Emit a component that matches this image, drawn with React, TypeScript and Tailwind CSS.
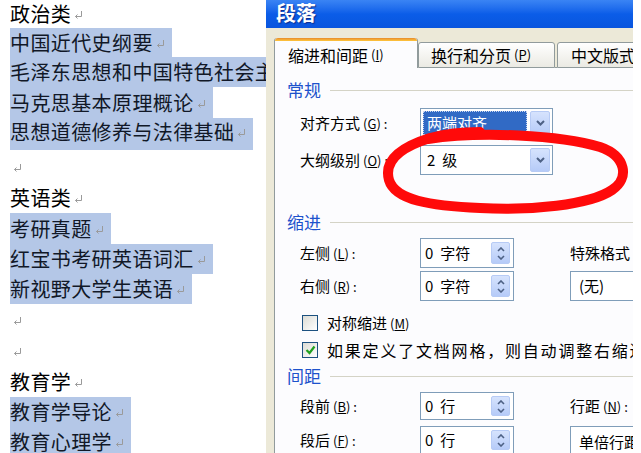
import React from "react";

type Line = { text: string; row: string; hl?: boolean; lift?: boolean };

const lines: Line[] = [
  { text: "政治类", row: "h-[28px]" },
  { text: "中国近代史纲要", row: "h-[29px]", hl: true },
  { text: "毛泽东思想和中国特色社会主义理论体系概论", row: "h-[30px]", hl: true },
  { text: "马克思基本原理概论", row: "h-[31px]", hl: true },
  { text: "思想道德修养与法律基础", row: "h-[32px]", hl: true, lift: true },
  { text: "", row: "h-[33px]" },
  { text: "英语类", row: "h-[30px]" },
  { text: "考研真题", row: "h-[31px]", hl: true },
  { text: "红宝书考研英语词汇", row: "h-[30px]", hl: true },
  { text: "新视野大学生英语", row: "h-[30px]", hl: true },
  { text: "", row: "h-[32px]" },
  { text: "", row: "h-[30px]" },
  { text: "教育学", row: "h-[31px]" },
  { text: "教育学导论", row: "h-[30px]", hl: true },
  { text: "教育心理学", row: "h-[30px]", hl: true },
];

function Mark() {
  return (
    <svg width="9" height="8" viewBox="0 0 9 8" className="ml-[3px] mr-[7px] shrink-0 translate-y-[1px]">
      <path d="M7.5 0V5.5H1.5" fill="none" stroke="#9a9a9a" strokeWidth="1" />
      <path d="M3.5 3.5L1.5 5.5L3.5 7.5" fill="none" stroke="#9a9a9a" strokeWidth="1" />
    </svg>
  );
}

function DocLine({ line }: { line: Line }) {
  return (
    <div className={`flex items-stretch pl-[10px] ${line.row}`}>
      <div
        className={`flex items-center whitespace-nowrap text-[20px] leading-[24px] tracking-[0.4px] ${
          line.hl ? "bg-[#b4c7e7] text-[#111827]" : "text-black"
        } ${line.lift ? "pb-[4px]" : ""}`}
      >
        {line.text}
        <Mark />
      </div>
    </div>
  );
}

function DropBtn() {
  return (
    <div className="flex h-full w-[20px] shrink-0 items-center justify-center rounded-[2px] border border-[#b7cbf5] bg-gradient-to-b from-[#d6e3fd] to-[#b6cbf8]">
      <svg width="9" height="6" viewBox="0 0 9 6">
        <path d="M1 1l3.5 3.5L8 1" fill="none" stroke="#4d6185" strokeWidth="2" />
      </svg>
    </div>
  );
}

function SpinBtn() {
  return (
    <div className="flex h-full w-[19px] shrink-0 flex-col items-center justify-center gap-[3px] rounded-[2px] border border-[#b7cbf5] bg-gradient-to-b from-[#d6e3fd] to-[#b6cbf8]">
      <svg width="8" height="5" viewBox="0 0 8 5">
        <path d="M1 4l3-3 3 3" fill="none" stroke="#4d6185" strokeWidth="1.6" />
      </svg>
      <svg width="8" height="5" viewBox="0 0 8 5">
        <path d="M1 1l3 3 3-3" fill="none" stroke="#4d6185" strokeWidth="1.6" />
      </svg>
    </div>
  );
}

function Key({ k, colon = true }: { k: string; colon?: boolean }) {
  return (
    <span className="ml-[3px] text-[13px] leading-[18px]">
      (<span className="underline">{k}</span>){colon ? " :" : ""}
    </span>
  );
}

function Spin({ num, unit }: { num: string; unit: string }) {
  return (
    <div className="flex h-full w-[94px] shrink-0 items-center justify-between border border-[#7f9db9] bg-white py-[3px] pl-[4px] pr-[3px]">
      <span className="flex gap-[7px] text-[15px]">
        <span>{num}</span>
        <span>{unit}</span>
      </span>
      <SpinBtn />
    </div>
  );
}

function Heading({ text }: { text: string }) {
  return (
    <div className="flex h-[22px] items-center gap-[9px] pl-[12px]">
      <span className="text-[17px] leading-[22px] text-[#1d52cc]">{text}</span>
      <div className="h-px flex-1 bg-[#d4d3c6]" />
    </div>
  );
}

function Check({ on }: { on?: boolean }) {
  return (
    <div className="flex h-[16px] w-[16px] shrink-0 items-center justify-center border border-[#1c5180] bg-gradient-to-br from-[#dcdcd5] to-white">
      {on && (
        <svg width="11" height="10" viewBox="0 0 11 10">
          <path d="M1.5 5l3 3 5-6.5" fill="none" stroke="#21a121" strokeWidth="2.2" />
        </svg>
      )}
    </div>
  );
}

export default function App() {
  return (
    <div className="relative flex h-[453px] w-[641px] overflow-hidden bg-white font-['Noto_Sans_CJK_SC',sans-serif] text-black">
      <div className="w-[266px] shrink-0 overflow-hidden">
        {lines.map((l, i) => (
          <DocLine key={i} line={l} />
        ))}
      </div>

      <div className="flex w-[367px] shrink-0 flex-col overflow-hidden">
        <div className="flex h-[28px] shrink-0 items-center bg-gradient-to-b from-[#3a84f4] via-[#0b5de8] to-[#0955de] pb-[3px] pl-[10px] text-[20px] font-bold leading-[24px] text-white [text-shadow:1px_1px_1px_#0b2d8f]">
          段落
        </div>
        <div className="flex flex-1">
          <div className="w-[4px] bg-gradient-to-r from-[#0a3fd6] to-[#1c63f0]" />
          <div className="w-[2px] bg-[#f6f5ef]" />
          <div className="flex flex-1 flex-col bg-[#ece9d8] pl-[8px]">
            <div className="flex h-[40px] shrink-0 items-end">
              <div className="flex h-[30px] w-[144px] shrink-0 flex-col rounded-t-[3px] border-x border-[#919b9c] bg-[#fcfcfe]">
                <div className="h-[3px] rounded-t-[3px] bg-gradient-to-b from-[#e68b2c] to-[#ffc73c]" />
                <div className="flex flex-1 items-center pl-[13px] text-[16px] leading-[20px]">
                  缩进和间距<Key k="I" colon={false} />
                </div>
              </div>
              <div className="flex h-[26px] w-[137px] shrink-0 items-center rounded-t-[3px] border border-[#919b9c] bg-gradient-to-b from-white to-[#ebeae3] pl-[12px] text-[16px] leading-[20px]">
                换行和分页<Key k="P" colon={false} />
              </div>
              <div className="h-[26px] w-[2px] shrink-0 border-b border-[#919b9c]" />
              <div className="flex h-[26px] w-[120px] shrink-0 items-center whitespace-nowrap rounded-t-[3px] border border-[#919b9c] bg-gradient-to-b from-white to-[#ebeae3] pl-[13px] text-[16px] leading-[20px]">
                中文版式
              </div>
            </div>

            <div className="flex flex-1 flex-col border-l border-[#919b9c] bg-[#fcfcfe] text-[15px] leading-[20px]">
              <div className="mt-[11px]">
                <Heading text="常规" />
              </div>

              <div className="mt-[7px] flex h-[30px] items-center pl-[25px]">
                <div className="w-[120px] shrink-0">
                  对齐方式<Key k="G" />
                </div>
                <div className="flex h-full w-[133px] shrink-0 items-stretch gap-[3px] border border-[#7f9db9] bg-white p-[2px]">
                  <div className="flex flex-1 items-center border border-dotted border-[#c9d5ee] bg-[#316ac5] pl-[3px] text-white">
                    两端对齐
                  </div>
                  <DropBtn />
                </div>
              </div>

              <div className="mt-[7px] flex h-[30px] items-center pl-[25px]">
                <div className="w-[120px] shrink-0">
                  大纲级别<Key k="O" />
                </div>
                <div className="flex h-full w-[133px] shrink-0 items-stretch border border-[#7f9db9] bg-white p-[2px]">
                  <div className="flex flex-1 items-center gap-[7px] pl-[4px]">
                    <span>2</span>
                    <span>级</span>
                  </div>
                  <DropBtn />
                </div>
              </div>

              <div className="mt-[36px]">
                <Heading text="缩进" />
              </div>

              <div className="mt-[5px] flex h-[30px] items-center pl-[25px]">
                <div className="w-[120px] shrink-0">
                  左侧<Key k="L" />
                </div>
                <Spin num="0" unit="字符" />
                <div className="ml-[56px] whitespace-nowrap">
                  特殊格式<Key k="S" />
                </div>
              </div>

              <div className="mt-[3px] flex h-[30px] items-center pl-[25px]">
                <div className="w-[120px] shrink-0">
                  右侧<Key k="R" />
                </div>
                <Spin num="0" unit="字符" />
                <div className="ml-[56px] flex h-full w-[100px] shrink-0 items-center border border-[#7f9db9] bg-white pl-[8px]">
                  (无)
                </div>
              </div>

              <div className="mt-[12px] flex h-[20px] items-center gap-[9px] pl-[27px]">
                <Check />
                <span>
                  对称缩进<Key k="M" colon={false} />
                </span>
              </div>

              <div className="mt-[7px] flex h-[20px] items-center gap-[9px] pl-[27px]">
                <Check on />
                <span className="whitespace-nowrap text-[16px] tracking-[1.8px]">
                  如果定义了文档网格，则自动调整右缩进(D)
                </span>
              </div>

              <div className="mt-[5px]">
                <Heading text="间距" />
              </div>

              <div className="mt-[5px] flex h-[28px] items-center pl-[25px]">
                <div className="w-[120px] shrink-0">
                  段前<Key k="B" />
                </div>
                <Spin num="0" unit="行" />
                <div className="ml-[56px] whitespace-nowrap">
                  行距<Key k="N" />
                </div>
              </div>

              <div className="mt-[6px] flex h-[28px] items-center pl-[25px]">
                <div className="w-[120px] shrink-0">
                  段后<Key k="F" />
                </div>
                <Spin num="0" unit="行" />
                <div className="ml-[56px] flex h-[32px] w-[100px] shrink-0 items-center self-start whitespace-nowrap border border-[#7f9db9] bg-white pl-[8px]">
                  单倍行距
                </div>
              </div>
            </div>
          </div>
        </div>
      </div>

      <div className="flex-1 bg-white" />

      <svg className="pointer-events-none absolute left-0 top-0" width="641" height="453" viewBox="0 0 641 453">
        <path
          d="M428 139 C480 131 560 135 600 147 C626 156 630 178 612 190 C590 205 530 211 480 208 C430 206 395 200 389 180 C384 162 398 148 430 138 C445 134 460 132 480 132"
          fill="none"
          stroke="#ff0a0a"
          strokeWidth="10"
          strokeLinecap="round"
          strokeLinejoin="round"
        />
      </svg>
    </div>
  );
}
